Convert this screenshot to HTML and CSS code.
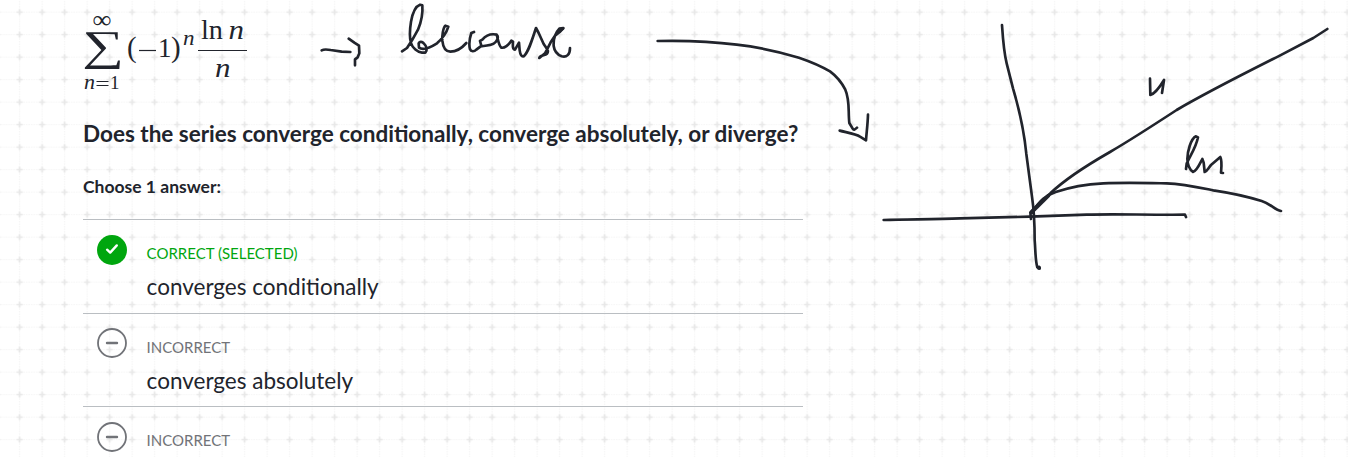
FILE: index.html
```html
<!DOCTYPE html>
<html lang="en">
<head>
<meta charset="utf-8">
<title>Series convergence</title>
<link rel="stylesheet" href="styles.css">
</head>
<body>
<div class="page">
  <svg class="layer" width="1348" height="457" aria-hidden="true">
    <defs>
      <pattern id="grid" x="8.4" y="0.9" width="22.5" height="22.5" patternUnits="userSpaceOnUse">
        <path class="grid-line" d="M11.25 0V22.5M0 11.25H22.5"/>
        <path class="grid-cross" d="M11.25 8.2V14.3M8.2 11.25H14.3"/>
      </pattern>
    </defs>
    <rect width="1348" height="457" fill="url(#grid)"/>
  </svg>

  <main class="exercise">
    <svg class="formula" width="180" height="100" viewBox="70 0 180 100" role="img">
      <text class="math" x="92.5" y="28" font-size="25" textLength="19" lengthAdjust="spacingAndGlyphs">∞</text>
      <text class="math sigma" transform="translate(82.2 59.8) scale(1.54 1.12)" font-size="38">∑</text>
      <text class="math it" x="84" y="89.4" font-size="20" textLength="11" lengthAdjust="spacingAndGlyphs">n</text>
      <path class="rule thin" d="M96.5 81.5H108.5M96.5 85.5H108.5"/>
      <text class="math" x="110" y="89.4" font-size="19">1</text>
      <text class="math" x="127" y="57" font-size="29">(</text>
      <path class="rule" d="M139 50.5H156"/>
      <text class="math" x="158" y="57" font-size="27">1</text>
      <text class="math" x="171" y="57" font-size="29">)</text>
      <text class="math it" x="183" y="45.4" font-size="20" textLength="11.5" lengthAdjust="spacingAndGlyphs">n</text>
      <text class="math" x="201" y="39" font-size="27" textLength="22" lengthAdjust="spacingAndGlyphs">ln</text>
      <text class="math it" x="228.5" y="39" font-size="27" textLength="15.5" lengthAdjust="spacingAndGlyphs">n</text>
      <path class="rule" d="M198 50.5H247"/>
      <text class="math it" x="215" y="76.6" font-size="27" textLength="15.5" lengthAdjust="spacingAndGlyphs">n</text>
    </svg>
    <h1 class="question">Does the series converge conditionally, converge absolutely, or diverge?</h1>
    <p class="hint">Choose 1 answer:</p>
    <ul class="answers">
      <li class="answer">
        <svg class="mark" width="30" height="30" viewBox="0 0 30 30"><circle cx="15" cy="15" r="15" fill="#00a60e"/><path d="M10.1 14.7L13.2 17.6L19.8 10.4" fill="none" stroke="#fff" stroke-width="2.4" stroke-linecap="round" stroke-linejoin="round"/></svg>
        <div class="body"><span class="status correct">CORRECT (SELECTED)</span><span class="choice">converges conditionally</span></div>
      </li>
      <li class="answer">
        <svg class="mark" width="30" height="30" viewBox="0 0 30 30"><circle class="ring" cx="15" cy="15" r="14"/><path class="minus" d="M10 15H20"/></svg>
        <div class="body"><span class="status">INCORRECT</span><span class="choice">converges absolutely</span></div>
      </li>
      <li class="answer">
        <svg class="mark" width="30" height="30" viewBox="0 0 30 30"><circle class="ring" cx="15" cy="15" r="14"/><path class="minus" d="M10 15H20"/></svg>
        <div class="body"><span class="status">INCORRECT</span></div>
      </li>
    </ul>
  </main>

  <svg class="layer ink" width="1348" height="457" aria-hidden="true">
    <g transform="translate(310 0) scale(.33333)">
      <path d="M35 151C42 147 51 148 62 150L95 155L121 156"/>
      <path d="M116 116L133 128L147 137L148 160L143 172L135 178L135 196"/>
      <path d="M276 154L291 144L306 121L324 89C334 65 339 40 337 16L330 14C318 18 308 37 303 65C299 90 299 115 303 129C307 144 323 157 336 158L346 158C353 150 350 139 342 131C336 124 329 124 326 130L327 143C340 152 362 142 381 130C397 116 409 100 415 80L406 77C399 83 396 108 397 122C399 141 407 155 421 155C435 155 455 145 469 129"/>
      <path d="M492 96L484 99C479 114 477 136 480 148C483 155 492 156 499 149L512 139C532 137 549 136 557 126C565 116 565 108 560 104C541 100 527 107 517 119L510 123L514 137M560 104C564 118 566 137 574 143C583 145 596 136 604 122L609 125C608 138 608 149 615 149L627 128L629 151C631 165 635 171 641 169C655 158 665 123 678 84L686 99L701 132C713 150 717 153 711 161C704 167 691 164 688 174L705 160L722 127L735 107L749 96L760 84L748 86C733 102 730 121 731 138C733 153 740 163 755 169C770 173 780 164 780 144"/>
      <path d="M747 94L759 86"/>
    </g>
    <g transform="translate(640 20) scale(.33333)">
      <path d="M53 63C145 61 221 65 290 74C360 82 421 96 477 113C515 126 541 137 570 154C593 171 606 189 616 209C630 241 624 274 628 309L638 326C641 331 646 328 651 323"/>
      <path d="M599 332C623 338 647 341 660 350L678 361C680 334 683 314 684 284"/>
    </g>
    <g transform="translate(870 10) scale(.33333)">
      <path d="M396 45C399 91 401 124 410 160L429 235C450 306 463 368 469 432L486 560C493 607 494 633 494 690C497 730 496 752 502 772L509 775L507 771"/>
      <path d="M507 773V774" stroke-width="12"/>
      <path d="M41 630C112 627 195 629 270 625L480 620L650 614C735 611 820 615 945 614L948 621"/>
      <path d="M483 627L481 607C502 585 523 568 541 550C586 507 638 473 720 426C785 388 848 347 920 300C1010 247 1110 197 1225 139L1330 84L1372 57"/>
      <path d="M486 608C510 570 528 556 557 546C595 533 641 523 700 520C766 517 838 519 890 520C939 522 985 532 1030 541C1084 549 1124 557 1175 573C1204 582 1214 600 1233 603"/>
      <path d="M486 606L536 556" stroke-width="11"/>
    </g>
    <g transform="translate(1100 10) scale(.33333)">
      <path d="M150 206L151 255C165 251 177 235 192 210L186 249"/>
      <path d="M258 477L260 461C272 434 288 413 294 382L288 379C272 386 262 427 262 447C263 467 272 481 279 486C290 484 297 466 307 447L311 458L314 486C321 484 325 474 333 465L361 441C367 455 364 473 363 488L369 489"/>
    </g>
  </svg>
</div>
</body>
</html>
```
FILE: styles.css
```css
body { margin: 0; background: #fff; font-family: Lato, sans-serif; color: #21242c; }
.page { position: relative; width: 1348px; height: 457px; overflow: hidden; }
.layer { position: absolute; inset: 0; }
.grid-line { stroke: #f5f5f5; stroke-width: 1.2; stroke-dasharray: 1.5 1; fill: none; }
.grid-cross { stroke: #e7e7e7; stroke-width: 1.7; fill: none; }
.ink { fill: none; stroke: #21242c; stroke-width: 8; stroke-linecap: round; stroke-linejoin: round; }
.exercise { position: relative; display: flex; flex-direction: column; width: 720px; padding-left: 83px; }
.formula { display: block; margin-left: -13px; }
.math { font-family: "Liberation Serif", serif; fill: #21242c; }
.it { font-style: italic; }
.rule { stroke: #21242c; stroke-width: 1.2; }
.thin { stroke-width: 1; }
.question { margin: 20px 0 0; font-size: 22.5px; line-height: 28px; font-weight: 700; white-space: nowrap; }
.hint { margin: 28px 0 0; font-size: 17.5px; line-height: 22px; font-weight: 700; }
.answers { list-style: none; margin: 21px 0 0; padding: 0; }
.answer { display: flex; gap: 19.6px; box-sizing: border-box; height: 93.5px; padding: 14.9px 14px 0; border-top: 1px solid #babec2; }
.mark { flex: none; display: block; }
.ring { fill: none; stroke: #717378; stroke-width: 1.8; }
.minus { stroke: #717378; stroke-width: 2.4; stroke-linecap: round; }
.body { display: flex; flex-direction: column; padding-top: 7.3px; }
.status { font-size: 15px; line-height: 22px; color: #717378; }
.correct { color: #00a60e; }
.choice { margin-top: 9px; font-size: 22.5px; line-height: 28px; }
```
